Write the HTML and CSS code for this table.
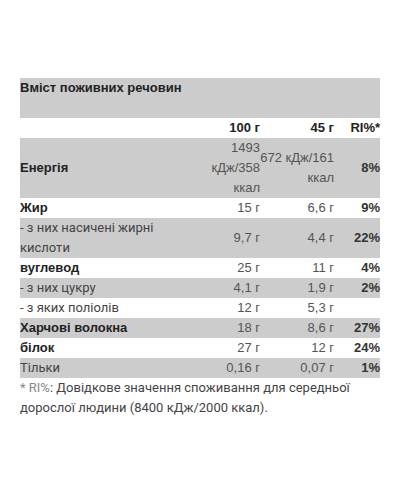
FILE: index.html
```html
<!DOCTYPE html>
<html lang="uk">
<head>
  <meta charset="UTF-8">
  <title>Вміст поживних речовин</title>
  <link rel="stylesheet" href="styles.css">
</head>
<body>
  <div class="nutrition">
    <table class="nutri-table">
      <colgroup>
        <col class="col-name">
        <col class="col-100">
        <col class="col-45">
        <col class="col-ri">
      </colgroup>
      <tr class="grey">
        <th colspan="4" class="title">Вміст поживних речовин</th>
      </tr>
      <tr>
        <th></th>
        <th class="num">100 г</th>
        <th class="num">45 г</th>
        <th class="num">RI%*</th>
      </tr>
      <tr class="grey">
        <th>Енергія</th>
        <td class="num">1493 кДж/358 ккал</td>
        <td class="num">672 кДж/161 ккал</td>
        <td class="num ri">8%</td>
      </tr>
      <tr>
        <th>Жир</th>
        <td class="num">15 г</td>
        <td class="num">6,6 г</td>
        <td class="num ri">9%</td>
      </tr>
      <tr class="grey">
        <td class="sub">- з них насичені жирні кислоти</td>
        <td class="num">9,7 г</td>
        <td class="num">4,4 г</td>
        <td class="num ri">22%</td>
      </tr>
      <tr>
        <th>вуглевод</th>
        <td class="num">25 г</td>
        <td class="num">11 г</td>
        <td class="num ri">4%</td>
      </tr>
      <tr class="grey">
        <td class="sub">- з них цукру</td>
        <td class="num">4,1 г</td>
        <td class="num">1,9 г</td>
        <td class="num ri">2%</td>
      </tr>
      <tr>
        <td class="sub">- з яких поліолів</td>
        <td class="num">12 г</td>
        <td class="num">5,3 г</td>
        <td class="num ri"></td>
      </tr>
      <tr class="grey">
        <th>Харчові волокна</th>
        <td class="num">18 г</td>
        <td class="num">8,6 г</td>
        <td class="num ri">27%</td>
      </tr>
      <tr>
        <th>білок</th>
        <td class="num">27 г</td>
        <td class="num">12 г</td>
        <td class="num ri">24%</td>
      </tr>
      <tr class="grey">
        <td class="sub">Тільки</td>
        <td class="num">0,16 г</td>
        <td class="num">0,07 г</td>
        <td class="num ri">1%</td>
      </tr>
    </table>
    <p class="note"><span class="star">* RI%</span>: Довідкове значення споживання для середньої дорослої людини (8400 кДж/2000 ккал).</p>
  </div>
</body>
</html>
```

FILE: styles.css
```css
body {
  margin: 0;
  padding: 78px 20px 0;
  background: #fff;
  font-family: "Liberation Sans", Arial, sans-serif;
  font-size: 13px;
  line-height: 20px;
  color: #555;
}
.nutri-table {
  width: 360px;
  table-layout: fixed;
  border-collapse: collapse;
}
.col-name { width: 180px; }
.col-100 { width: 60px; }
.col-45 { width: 74px; }
.col-ri { width: 46px; }
.nutri-table th,
.nutri-table td {
  padding: 0;
  text-align: left;
  vertical-align: middle;
}
.nutri-table th {
  font-weight: bold;
  color: #222;
}
.grey {
  background: #cccccc;
}
.title {
  padding-bottom: 20px !important;
  vertical-align: top;
}
.num {
  text-align: right !important;
}
.ri {
  font-weight: bold;
  color: #333;
}
.sub {
  font-family: Roboto, "Liberation Sans", sans-serif;
  color: #444;
}
.note {
  margin: 0;
  width: 360px;
  font-family: Roboto, "Liberation Sans", sans-serif;
  color: #444;
}
.star {
  color: #888;
}
```
